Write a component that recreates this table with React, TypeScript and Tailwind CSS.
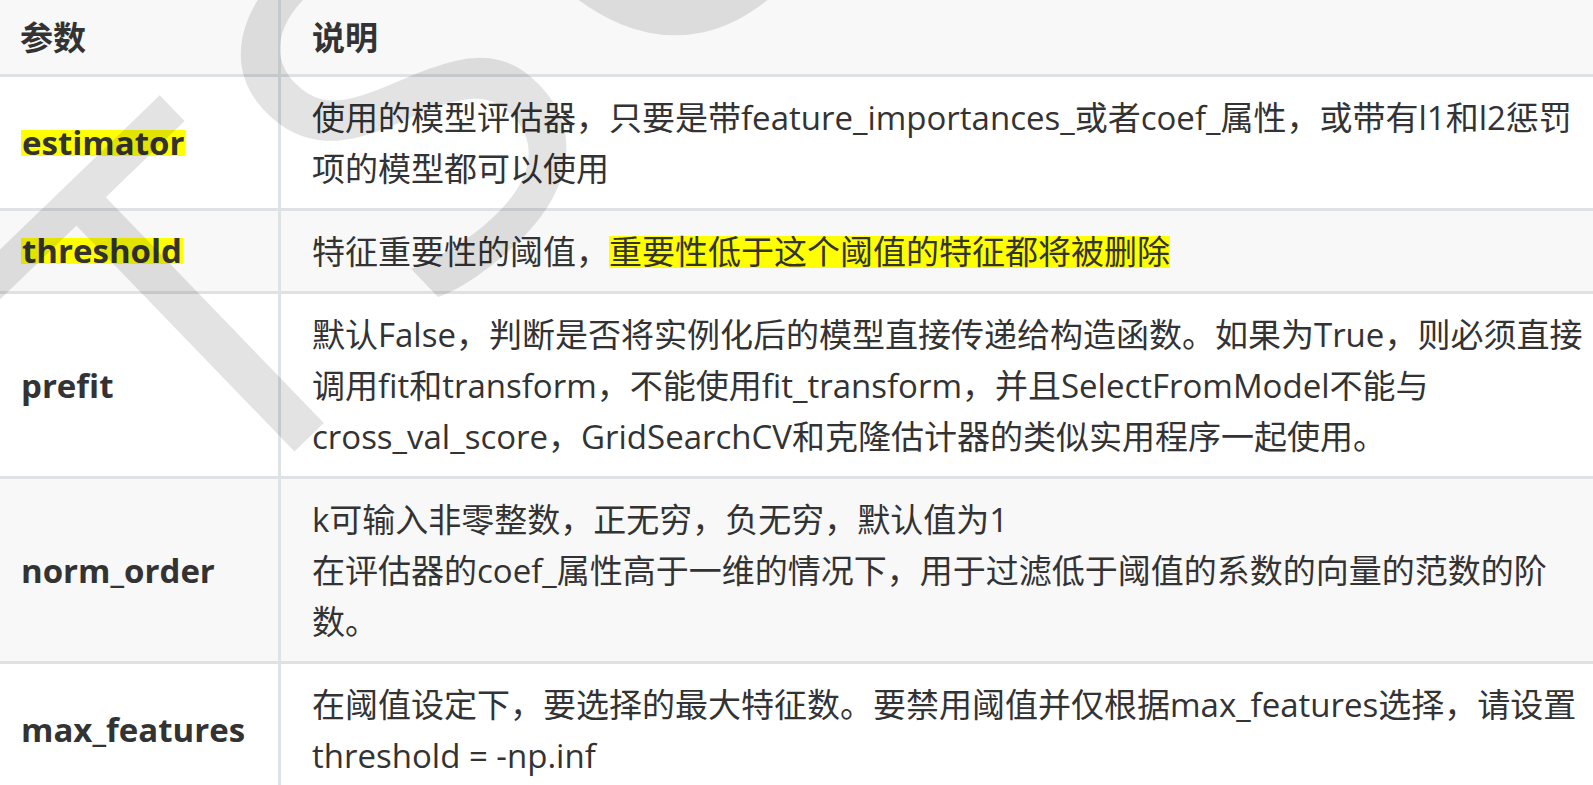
import React from 'react';

type Row = {
  name: string;
  mark?: boolean;
  shaded: boolean;
  desc: React.ReactNode[];
};

const hl = (t: string) => (
  <span className="inline-block bg-[#ffff00] leading-[32px]">{t}</span>
);

const rows: Row[] = [
  {
    name: 'estimator',
    mark: true,
    shaded: false,
    desc: [
      '使用的模型评估器，只要是带feature_importances_或者coef_属性，或带有l1和l2惩罚',
      '项的模型都可以使用',
    ],
  },
  {
    name: 'threshold',
    mark: true,
    shaded: true,
    desc: [<>特征重要性的阈值，{hl('重要性低于这个阈值的特征都将被删除')}</>],
  },
  {
    name: 'prefit',
    shaded: false,
    desc: [
      '默认False，判断是否将实例化后的模型直接传递给构造函数。如果为True，则必须直接',
      '调用fit和transform，不能使用fit_transform，并且SelectFromModel不能与',
      'cross_val_score，GridSearchCV和克隆估计器的类似实用程序一起使用。',
    ],
  },
  {
    name: 'norm_order',
    shaded: true,
    desc: [
      'k可输入非零整数，正无穷，负无穷，默认值为1',
      '在评估器的coef_属性高于一维的情况下，用于过滤低于阈值的系数的向量的范数的阶',
      '数。',
    ],
  },
  {
    name: 'max_features',
    shaded: false,
    desc: [
      '在阈值设定下，要选择的最大特征数。要禁用阈值并仅根据max_features选择，请设置',
      'threshold = -np.inf',
    ],
  },
];

export default function App() {
  return (
    <div className="relative w-[1593px] h-[785px] overflow-hidden bg-white text-[#333] text-[33px] leading-[51px] font-['Open_Sans','Noto_Sans_CJK_SC',sans-serif]">
      <div className="grid grid-cols-[281px_1fr]">
        {/* header */}
        <div className="bg-[#f8f8f8] pl-[20px] pt-[12px] pb-[11px] font-bold border-r-[3px] border-b-[3px] border-[#dfe2e5]">
          参数
        </div>
        <div className="bg-[#f8f8f8] pl-[31px] pt-[12px] pb-[11px] font-bold border-b-[3px] border-[#dfe2e5]">
          说明
        </div>

        {rows.map((r, i) => {
          const last = i === rows.length - 1;
          return (
            <React.Fragment key={r.name}>
              <div
                className={
                  'flex items-center pl-[21px] font-bold border-r-[3px] border-[#dfe2e5] ' +
                  (r.shaded ? 'bg-[#f8f8f8] ' : 'bg-white ') +
                  (last ? '' : 'border-b-[3px]')
                }
              >
                {r.mark ? (
                  <span className="inline-block bg-[#ffff00] leading-[26px] px-[1px]">{r.name}</span>
                ) : (
                  r.name
                )}
              </div>
              <div
                className={
                  'pl-[31px] pt-[15px] pb-[14px] whitespace-nowrap border-[#dfe2e5] ' +
                  (r.shaded ? 'bg-[#f8f8f8] ' : 'bg-white ') +
                  (last ? '' : 'border-b-[3px]')
                }
              >
                {r.desc.map((line, j) => (
                  <div key={j}>{line}</div>
                ))}
              </div>
            </React.Fragment>
          );
        })}
      </div>

      {/* watermark */}
      <div className="pointer-events-none absolute left-[-90px] top-[218px] origin-top-left rotate-[-44deg] whitespace-nowrap tracking-[30px] text-[490px] leading-none text-[rgba(0,0,0,0.11)] font-['Open_Sans',sans-serif]">
        TSC
      </div>
    </div>
  );
}
